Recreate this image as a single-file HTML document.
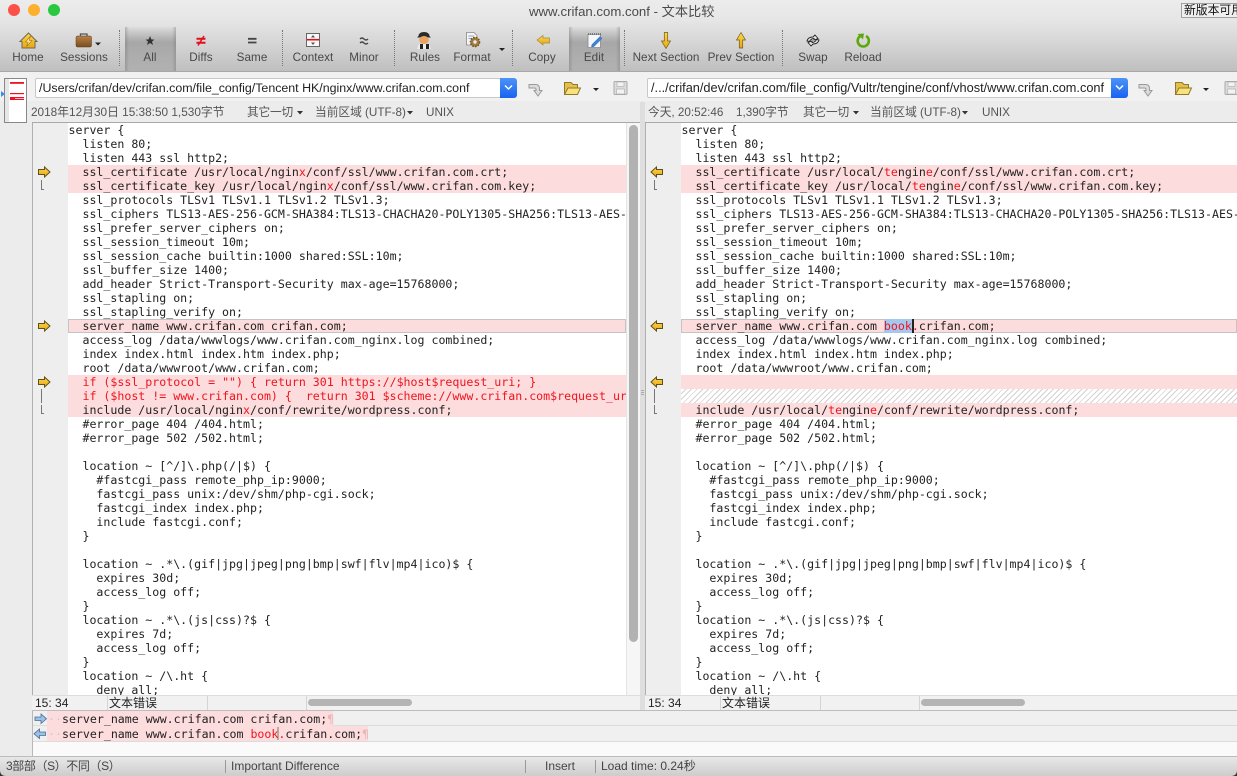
<!DOCTYPE html>
<html><head><meta charset="utf-8">
<style>
*{box-sizing:border-box}
html,body{margin:0;padding:0;width:1237px;height:776px;overflow:hidden;background:#ececec}
body{position:relative;font-family:"Liberation Sans","Noto Sans CJK SC",sans-serif}
.a{position:absolute}
#tb{left:0;top:0;width:1237px;height:72px;background:linear-gradient(#ececec 0,#e6e6e6 20px,#d8d8d8 40px,#bfbfbf 71px);border-bottom:1px solid #a8a8a8}
.press{top:27px;height:44px;background:linear-gradient(90deg,rgba(110,110,110,.35),rgba(110,110,110,0) 4px,rgba(110,110,110,0) calc(100% - 4px),rgba(110,110,110,.35)),linear-gradient(rgba(150,150,150,.05),rgba(135,135,135,.6) 35%,rgba(150,150,150,.35))}
.lb{top:50px;font-size:11.7px;letter-spacing:.05px;color:#484848;transform:translateX(-50%);white-space:nowrap;line-height:15px}
.sep{top:30px;height:36px;border-left:1px dotted #777}
.path{top:78px;height:20px;background:#fff;border:1px solid #c8c8c8;font-size:12.4px;color:#222;line-height:18px;padding-left:3px;white-space:nowrap;overflow:hidden;border-radius:2px}
.dd{top:78px;width:17px;height:20px;background:linear-gradient(#4d93f7,#1a62f0);border-radius:0 3px 3px 0}
.info{top:105px;font-size:11.7px;color:#555;line-height:15px;white-space:nowrap}
.gut{top:123px;width:36px;height:572px;background:#eee;border-left:1px solid #b0b0b0}
.code{top:123px;height:572px;background:#fff;overflow:hidden}
pre{margin:0;font:11.6px/14px "DejaVu Sans Mono","Liberation Mono",monospace;color:#222;position:absolute;left:0;top:0;white-space:pre}
.p{position:absolute;left:0;right:0;height:14px;background:#fddcdd}
i{font-style:normal;color:#f0141e}
.st{top:695px;height:15px;background:#f1f1f1;border-top:1px solid #ddd;font-size:12px;line-height:14px;color:#222;white-space:nowrap}
.dv{top:696px;height:14px;border-left:1px solid #d4d4d4}
.thumb{top:699px;height:7px;width:104px;background:#b4b4b4;border-radius:4px}
.row{left:47px;height:15px;background:#fddcdd;font:11.6px/17px "DejaVu Sans Mono",monospace;color:#222;white-space:pre;padding-left:1px}
.sb{top:759px;font-size:12px;color:#444;line-height:15px;white-space:nowrap}
.sd{top:760px;height:13px;border-left:1px solid #999}
</style></head><body>

<div class="a" id="tb"></div>
<div class="a press" style="left:125px;width:51px"></div>
<div class="a press" style="left:569px;width:51px"></div>
<div class="a sep" style="left:119px"></div>
<div class="a sep" style="left:282px"></div>
<div class="a sep" style="left:394px"></div>
<div class="a sep" style="left:512px"></div>
<div class="a sep" style="left:624px"></div>
<div class="a sep" style="left:782px"></div>

<div class="a" style="left:529px;top:3px;font-size:13.2px;line-height:17px;color:#4a4a4a;white-space:nowrap">www.crifan.com.conf - 文本比较</div>
<div class="a" style="left:1181px;top:3px;width:60px;height:15px;background:#efefef;border:1px solid #a0a0a0;font-size:11.8px;line-height:13px;color:#111;white-space:nowrap;padding-left:2px;overflow:hidden">新版本可用...</div>

<div class="a lb" style="left:28px">Home</div>
<div class="a lb" style="left:84px">Sessions</div>
<div class="a lb" style="left:150px">All</div>
<div class="a lb" style="left:201px">Diffs</div>
<div class="a lb" style="left:252px">Same</div>
<div class="a lb" style="left:313px">Context</div>
<div class="a lb" style="left:364px">Minor</div>
<div class="a lb" style="left:425px">Rules</div>
<div class="a lb" style="left:472px">Format</div>
<div class="a lb" style="left:542px">Copy</div>
<div class="a lb" style="left:594px">Edit</div>
<div class="a lb" style="left:666px">Next Section</div>
<div class="a lb" style="left:741px">Prev Section</div>
<div class="a lb" style="left:813px">Swap</div>
<div class="a lb" style="left:863px">Reload</div>

<!-- address rows -->
<div class="a" style="left:0;top:72px;width:1237px;height:30px;background:#f1f1f1"></div>
<div class="a" style="left:0;top:101px;width:1237px;height:22px;background:#ececec"></div>
<div class="a" style="left:32px;top:122px;width:608px;height:1px;background:#a9a9a9"></div>
<div class="a" style="left:645px;top:122px;width:592px;height:1px;background:#a9a9a9"></div>

<div class="a path" style="left:35px;width:466px">/Users/crifan/dev/crifan.com/file_config/Tencent HK/nginx/www.crifan.com.conf</div>
<div class="a dd" style="left:500px"></div>
<div class="a path" style="left:647px;width:465px;font-size:12.75px">/.../crifan/dev/crifan.com/file_config/Vultr/tengine/conf/vhost/www.crifan.com.conf</div>
<div class="a dd" style="left:1111px"></div>

<div class="a info" style="left:31px;font-size:11.8px">2018年12月30日 15:38:50 1,530字节</div>
<div class="a info" style="left:247px;letter-spacing:-.2px">其它一切</div>
<div class="a info" style="left:315px">当前区域 (UTF-8)</div>
<div class="a info" style="left:426px">UNIX</div>
<div class="a info" style="left:648px">今天, 20:52:46</div>
<div class="a info" style="left:736px">1,390字节</div>
<div class="a info" style="left:803px;letter-spacing:-.2px">其它一切</div>
<div class="a info" style="left:870px">当前区域 (UTF-8)</div>
<div class="a info" style="left:982px">UNIX</div>

<!-- overview -->
<div class="a" style="left:4px;top:78px;width:23px;height:45px;background:#fff;border:1px solid #888"></div>
<div class="a" style="left:5px;top:79px;width:4px;height:43px;background:#e6e6e6"></div>

<!-- panes -->
<div class="a gut" style="left:32px"></div>
<div class="a gut" style="left:645px"></div>
<div class="a" style="left:640px;top:102px;width:5px;height:640px;background:#dedede"></div>
<div class="a" style="left:626px;top:123px;width:14px;height:572px;background:#f6f6f6;border-left:1px solid #e4e4e4"></div>
<div class="a" style="left:629px;top:125px;width:9px;height:517px;background:#b2b2b2;border-radius:5px"></div>

<div class="a code" style="left:68px;width:558px">
<div class="p" style="top:42px;height:28px"></div>
<div class="p" style="top:196px;border:1px solid #c4c4c4"></div>
<div class="p" style="top:252px;height:42px"></div>
<pre style="left:.5px">server {
  listen 80;
  listen 443 ssl http2;
  ssl_certificate /usr/local/ngin<i>x</i>/conf/ssl/www.crifan.com.crt;
  ssl_certificate_key /usr/local/ngin<i>x</i>/conf/ssl/www.crifan.com.key;
  ssl_protocols TLSv1 TLSv1.1 TLSv1.2 TLSv1.3;
  ssl_ciphers TLS13-AES-256-GCM-SHA384:TLS13-CHACHA20-POLY1305-SHA256:TLS13-AES-128-GCM-SHA256;
  ssl_prefer_server_ciphers on;
  ssl_session_timeout 10m;
  ssl_session_cache builtin:1000 shared:SSL:10m;
  ssl_buffer_size 1400;
  add_header Strict-Transport-Security max-age=15768000;
  ssl_stapling on;
  ssl_stapling_verify on;
  server_name www.crifan.com crifan.com;
  access_log /data/wwwlogs/www.crifan.com_nginx.log combined;
  index index.html index.htm index.php;
  root /data/wwwroot/www.crifan.com;
  <i>if ($ssl_protocol = "") { return 301 https://$host$request_uri; }</i>
  <i>if ($host != www.crifan.com) {  return 301 $scheme://www.crifan.com$request_uri; }</i>
  include /usr/local/ngin<i>x</i>/conf/rewrite/wordpress.conf;
  #error_page 404 /404.html;
  #error_page 502 /502.html;

  location ~ [^/]\.php(/|$) {
    #fastcgi_pass remote_php_ip:9000;
    fastcgi_pass unix:/dev/shm/php-cgi.sock;
    fastcgi_index index.php;
    include fastcgi.conf;
  }

  location ~ .*\.(gif|jpg|jpeg|png|bmp|swf|flv|mp4|ico)$ {
    expires 30d;
    access_log off;
  }
  location ~ .*\.(js|css)?$ {
    expires 7d;
    access_log off;
  }
  location ~ /\.ht {
    deny all;</pre>
</div>

<div class="a code" style="left:681px;width:556px">
<div class="p" style="top:42px;height:28px"></div>
<div class="p" style="top:196px;border:1px solid #c4c4c4"></div>
<div class="p" style="top:252px"></div>
<div class="p" style="top:266px;background:repeating-linear-gradient(135deg,#fff 0,#fff 3px,#d2d2d2 3px,#d2d2d2 4px)"></div>
<div class="p" style="top:280px"></div>
<div class="a" style="left:203px;top:196px;width:28px;height:14px;background:#a6c8ef"></div>
<div class="a" style="left:231px;top:196px;width:1.5px;height:14px;background:#222"></div>
<pre style="left:.5px">server {
  listen 80;
  listen 443 ssl http2;
  ssl_certificate /usr/local/<i>te</i>ngin<i>e</i>/conf/ssl/www.crifan.com.crt;
  ssl_certificate_key /usr/local/<i>te</i>ngin<i>e</i>/conf/ssl/www.crifan.com.key;
  ssl_protocols TLSv1 TLSv1.1 TLSv1.2 TLSv1.3;
  ssl_ciphers TLS13-AES-256-GCM-SHA384:TLS13-CHACHA20-POLY1305-SHA256:TLS13-AES-128-GCM-SHA256;
  ssl_prefer_server_ciphers on;
  ssl_session_timeout 10m;
  ssl_session_cache builtin:1000 shared:SSL:10m;
  ssl_buffer_size 1400;
  add_header Strict-Transport-Security max-age=15768000;
  ssl_stapling on;
  ssl_stapling_verify on;
  server_name www.crifan.com <i>book.</i>crifan.com;
  access_log /data/wwwlogs/www.crifan.com_nginx.log combined;
  index index.html index.htm index.php;
  root /data/wwwroot/www.crifan.com;


  include /usr/local/<i>te</i>ngin<i>e</i>/conf/rewrite/wordpress.conf;
  #error_page 404 /404.html;
  #error_page 502 /502.html;

  location ~ [^/]\.php(/|$) {
    #fastcgi_pass remote_php_ip:9000;
    fastcgi_pass unix:/dev/shm/php-cgi.sock;
    fastcgi_index index.php;
    include fastcgi.conf;
  }

  location ~ .*\.(gif|jpg|jpeg|png|bmp|swf|flv|mp4|ico)$ {
    expires 30d;
    access_log off;
  }
  location ~ .*\.(js|css)?$ {
    expires 7d;
    access_log off;
  }
  location ~ /\.ht {
    deny all;</pre>
</div>

<!-- pane status -->
<div class="a st" style="left:32px;width:608px;padding-left:3px">15: 34<span style="position:absolute;left:77px">文本错误</span></div>
<div class="a st" style="left:645px;width:592px;padding-left:3px">15: 34<span style="position:absolute;left:77px">文本错误</span></div>
<div class="a dv" style="left:107px"></div><div class="a dv" style="left:207px"></div><div class="a dv" style="left:306px"></div>
<div class="a dv" style="left:720px"></div><div class="a dv" style="left:820px"></div><div class="a dv" style="left:919px"></div>
<div class="a thumb" style="left:308px"></div>
<div class="a thumb" style="left:921px"></div>

<!-- bottom compare -->
<div class="a" style="left:32px;top:710px;width:1205px;height:1px;background:#bdbdbd"></div>
<div class="a" style="left:32px;top:711px;width:1205px;height:15px;background:#f0f0f0;border-bottom:1px solid #dcdcdc"></div>
<div class="a" style="left:32px;top:726px;width:1205px;height:15px;background:#f0f0f0"></div>
<div class="a" style="left:32px;top:741px;width:1205px;height:15px;background:#fafafa;border-top:1px solid #dcdcdc"></div>
<div class="a" style="left:0;top:695px;width:32px;height:61px;background:#ececec"></div>
<div class="a" style="left:32px;top:711px;width:1px;height:45px;background:#b8b8b8"></div>
<div class="a row" style="top:711px;width:286px"><span style="color:#ccc">··</span>server_name www.crifan.com crifan.com;<span style="color:#e8b8b8">¶</span></div>
<div class="a row" style="top:726px;width:321px"><span style="color:#ccc">··</span>server_name www.crifan.com <i>book.</i>crifan.com;<span style="color:#e8b8b8">¶</span></div>

<!-- status bar -->
<div class="a" style="left:0;top:756px;width:1237px;height:20px;background:linear-gradient(#e8e8e8,#cdcdcd);border-top:1px solid #bcbcbc"></div>
<div class="a sb" style="left:6px;letter-spacing:-.4px">3部部（S）不同（S）</div>
<div class="a sd" style="left:225px"></div>
<div class="a sb" style="left:231px">Important Difference</div>
<div class="a sd" style="left:525px"></div>
<div class="a sb" style="left:545px">Insert</div>
<div class="a sd" style="left:595px"></div>
<div class="a sb" style="left:601px">Load time: 0.24秒</div>

<!-- icon layer -->
<svg class="a" style="left:0;top:0;pointer-events:none" width="1237" height="776" viewBox="0 0 1237 776">
<defs>
<linearGradient id="y" x1="0" y1="0" x2="0" y2="1"><stop offset="0" stop-color="#fbd84e"/><stop offset="1" stop-color="#e9a612"/></linearGradient>
<linearGradient id="br" x1="0" y1="0" x2="0" y2="1"><stop offset="0" stop-color="#b9814a"/><stop offset="1" stop-color="#7a4d20"/></linearGradient>
<pattern id="sk" width="6" height="6" patternUnits="userSpaceOnUse"><rect width="3" height="6" fill="#222"/><rect x="3" width="3" height="6" fill="#eee"/></pattern>
</defs>
<circle cx="14" cy="10" r="6" fill="#fc5048"/><circle cx="34" cy="10" r="6" fill="#fdb02c"/><circle cx="54" cy="10" r="6" fill="#2ac83f"/>

<!-- Home -->
<path d="M28.5 33 L37 41.5 L35 41.5 L35 48 L22 48 L22 41.5 L20 41.5 Z" fill="url(#y)" stroke="#6f6a55" stroke-width="1"/>
<path d="M30.5 36 L25.5 42 L28.2 42 L26.5 46.5 L32 40.5 L29.2 40.5 Z" fill="#fff3a8" stroke="#a8700f" stroke-width=".6"/>
<!-- Sessions -->
<rect x="76" y="36" width="15.5" height="11" rx="1.5" fill="url(#br)" stroke="#5a3a18" stroke-width=".5"/>
<path d="M80.5 36 V34 H87 V36" fill="none" stroke="#555" stroke-width="1.3"/>
<path d="M95 42.5 H101 L98 45.5 Z" fill="#222"/>
<!-- All -->
<path d="M150 36 L151.3 39.4 L154.4 39.6 L152 41.6 L153 45 L150 43 L147 45 L148 41.6 L145.6 39.6 L148.7 39.4 Z" fill="#333"/>
<!-- Diffs -->
<path d="M196.5 38.8 H205.5 M196.5 42.8 H205.5" stroke="#e2101c" stroke-width="2"/>
<path d="M204 36 L198 45.5" stroke="#e2101c" stroke-width="1.5"/>
<!-- Same -->
<path d="M248 38.8 H256.5 M248 42.5 H256.5" stroke="#444" stroke-width="1.8"/>
<!-- Context -->
<rect x="306.5" y="33.5" width="13" height="13" fill="#f7f7f7" stroke="#666"/>
<path d="M307 39.7 H319" stroke="#e2101c" stroke-width="1.6"/>
<path d="M313 35 L315 37.5 H311 Z M313 45 L315 42.5 H311 Z" fill="#555"/>
<!-- Minor -->
<path d="M360 39 q2 -2 4 0 t4 0 M360 43 q2 -2 4 0 t4 0" fill="none" stroke="#444" stroke-width="1.3"/>
<!-- Rules -->
<path d="M418.5 36 Q419 32 424 32 Q429 32 429.5 36 L431 37.5 H417 Z" fill="#2a2a2a"/>
<ellipse cx="424" cy="40" rx="4.8" ry="4" fill="#eba360"/>
<path d="M417 49 L419 44 H429 L431 49 Z" fill="url(#sk)"/>
<!-- Format -->
<path d="M466.5 32.5 H474 L477 35.5 V45 H466.5 Z" fill="#f4f4f4" stroke="#888" stroke-width=".8"/>
<path d="M468.5 36 H474 M468.5 38.5 H472" stroke="#6a8ab5" stroke-width=".8"/>
<circle cx="475" cy="42" r="4.6" fill="#a07b3c" stroke="#6c4f1f" stroke-width="1.4" stroke-dasharray="1.6 1.2"/>
<circle cx="475" cy="42" r="1.7" fill="#eee"/>
<path d="M499 48 H505 L502 51 Z" fill="#222"/>
<!-- Copy -->
<path d="M537 40 L543 35.5 V38 H549.5 V43 H543 V45 L537 40 Z" fill="url(#y)" stroke="#a08a3c" stroke-width=".7"/>
<!-- Edit -->
<path d="M588 34.5 H600.5 V47.5 H588 Z" fill="#f4f6fa" stroke="#8a8a8a" stroke-width=".8"/>
<path d="M588 34 h13" stroke="#555" stroke-width="1.2" stroke-dasharray="1 1"/>
<path d="M592 44.5 L600 36.5 L602 38.5 L594 46.5 L591.5 47 Z" fill="#3f86d6" stroke="#2a5f9e" stroke-width=".5"/>
<!-- Next -->
<path d="M664.3 32.5 H667.7 V41 H670.5 L666 48.5 L661.5 41 H664.3 Z" fill="url(#y)" stroke="#6f5a1a" stroke-width=".7"/>
<!-- Prev -->
<path d="M739.3 48 H742.7 V40 H745.5 L741 32.5 L736.5 40 H739.3 Z" fill="url(#y)" stroke="#6f5a1a" stroke-width=".7"/>
<!-- Swap -->
<path d="M807 41 q1 -4 6 -4 l2 -2 l3 3.5 l-4 1.5 l0 -1.5 q-3 0 -4.5 3 Z" fill="#e8e8e8" stroke="#222" stroke-width=".9"/>
<path d="M819 40 q-1 4 -6 4 l-2 2 l-3 -3.5 l4 -1.5 l0 1.5 q3 0 4.5 -3 Z" fill="#e8e8e8" stroke="#222" stroke-width=".9"/>
<!-- Reload -->
<path d="M860.5 36 A5.6 5.6 0 1 0 866 36" fill="none" stroke="#5ba90a" stroke-width="2.6"/>
<path d="M857.5 34 L864 33.5 L863 39.5 Z" fill="#5ba90a"/>

<!-- address icons -->
<path d="M505 85.5 L508.5 89 L512 85.5" fill="none" stroke="#fff" stroke-width="1.5"/>
<path d="M1116 85.5 L1119.5 89 L1123 85.5" fill="none" stroke="#fff" stroke-width="1.5"/>
<g fill="#dcdcdc" stroke="#9a9a9a" stroke-width="1">
<path d="M529 84.5 H536 Q539.5 84.5 539.5 89 V90.5 H542 L538 96 L534 90.5 H536 V89.5 Q536 88 534.5 88 H529 Z"/>
<rect x="614" y="81.5" width="13" height="13" rx="1" fill="#dcdcdc" stroke="#aaa"/>
<rect x="617" y="82" width="7" height="4.5" fill="#f2f2f2" stroke="#aaa" stroke-width=".6"/>
<rect x="616.5" y="89" width="8" height="5" fill="#f2f2f2" stroke="#aaa" stroke-width=".6"/>
<path d="M1139 84.5 H1146 Q1149.5 84.5 1149.5 89 V90.5 H1152 L1148 96 L1144 90.5 H1146 V89.5 Q1146 88 1144.5 88 H1139 Z"/>
<rect x="1225" y="81.5" width="13" height="13" rx="1" fill="#dcdcdc" stroke="#aaa"/>
<rect x="1228" y="82" width="7" height="4.5" fill="#f2f2f2" stroke="#aaa" stroke-width=".6"/>
<rect x="1227.5" y="89" width="8" height="5" fill="#f2f2f2" stroke="#aaa" stroke-width=".6"/>
</g>
<g stroke="#8f7a2c" stroke-width="1">
<path d="M564.5 82.5 H571 L573 84.5 H577.5 V94.5 H564.5 Z" fill="#e6bf4a"/>
<path d="M564.5 94.5 L568 88 H580.5 L577.5 94.5 Z" fill="#f9e27c"/>
<path d="M1175.5 82.5 H1182 L1184 84.5 H1188.5 V94.5 H1175.5 Z" fill="#e6bf4a"/>
<path d="M1175.5 94.5 L1179 88 H1191.5 L1188.5 94.5 Z" fill="#f9e27c"/>
</g>
<path d="M593 88 H599 L596 91 Z" fill="#222"/>
<path d="M1203 88 H1209 L1206 91 Z" fill="#222"/>

<!-- info dropdowns -->
<g fill="#333">
<path d="M297 111 H303 L300 114.5 Z"/><path d="M407 111 H413 L410 114.5 Z"/>
<path d="M853 111 H859 L856 114.5 Z"/><path d="M962 111 H968 L965 114.5 Z"/>
</g>

<!-- overview map -->
<rect x="10" y="82" width="14" height="1.8" fill="#f01020"/>
<rect x="10" y="93" width="14" height="1.2" fill="#f01020"/>
<rect x="10" y="97" width="14" height="3" fill="#f01020"/>
<rect x="15" y="98.2" width="9" height=".7" fill="#fff"/>
<path d="M1 91 L5 94 L1 97 Z" fill="#3d8bf2"/>

<!-- gutter arrows -->
<g fill="url(#y)" stroke="#5f5018" stroke-width="1">
<path d="M38.5 169.5 H44.5 V167 L50 172 L44.5 177 V174.5 H38.5 Z"/>
<path d="M38.5 323.5 H44.5 V321 L50 326 L44.5 331 V328.5 H38.5 Z"/>
<path d="M38.5 379.5 H44.5 V377 L50 382 L44.5 387 V384.5 H38.5 Z"/>
<path d="M662.5 169.5 H656.5 V167 L651 172 L656.5 177 V174.5 H662.5 Z"/>
<path d="M662.5 323.5 H656.5 V321 L651 326 L656.5 331 V328.5 H662.5 Z"/>
<path d="M662.5 379.5 H656.5 V377 L651 382 L656.5 387 V384.5 H662.5 Z"/>
</g>
<g fill="none" stroke="#777" stroke-width="1">
<path d="M41.5 180 V189.5 H44"/>
<path d="M41.5 389 V403 M41.5 405 V413.5 H44"/>
<path d="M654.5 180 V189.5 H657"/>
<path d="M654.5 389 V403 M654.5 405 V413.5 H657"/>
</g>
<!-- splitter grip -->
<path d="M641 390.5 H644 M641 392.5 H644 M641 394.5 H644" stroke="#aaa" stroke-width="1"/>

<!-- bottom arrows -->
<path d="M35 717 H41 V714 L46.5 718.8 L41 723.5 V720.5 H35 Z" fill="#9cc0e6" stroke="#4a6d90" stroke-width=".8"/>
<path d="M45.5 732 H39.5 V729 L34 733.8 L39.5 738.5 V735.5 H45.5 Z" fill="#9cc0e6" stroke="#4a6d90" stroke-width=".8"/>
<!-- caret in bottom row -->
<rect x="277.5" y="727" width="1" height="13" fill="#777"/>
<!-- window corner -->
<path d="M0 776 V770 Q0 776 6 776 Z" fill="#333"/>
<path d="M1237 776 V770 Q1237 776 1231 776 Z" fill="#333"/>
</svg>
</body></html>
